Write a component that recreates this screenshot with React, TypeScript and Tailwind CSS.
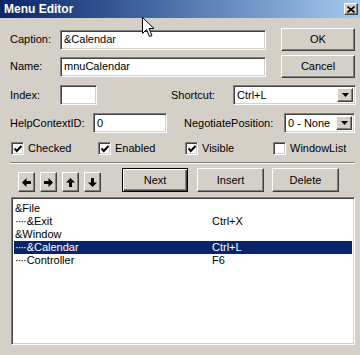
import React from "react";

const raised =
  "bg-[#d4d0c8] border border-t-white border-l-white border-r-[#404040] border-b-[#404040] shadow-[inset_-1px_-1px_0_#808080]";
const sunken =
  "bg-white border border-t-[#808080] border-l-[#808080] border-r-white border-b-white shadow-[inset_1px_1px_0_#404040,inset_-1px_-1px_0_#d4d0c8]";

function TextBox({ w, value }: { w: string; value?: string }) {
  return (
    <div className={`${sunken} ${w} h-[20px] flex items-center pl-[3px] overflow-hidden whitespace-nowrap`}>
      {value}
    </div>
  );
}

function Combo({ w, value }: { w: string; value: string }) {
  return (
    <div className={`${sunken} ${w} h-[20px] flex items-center p-[2px] pl-[3px]`}>
      <div className="flex-1 whitespace-nowrap overflow-hidden">{value}</div>
      <div className={`${raised} w-[16px] h-full flex items-center justify-center`}>
        <svg width="7" height="4" viewBox="0 0 7 4">
          <path d="M0 0H7L3.5 4Z" fill="#000" />
        </svg>
      </div>
    </div>
  );
}

function Button({ w, label, def }: { w: string; label: string; def?: boolean }) {
  const cls = def
    ? "bg-[#d4d0c8] border border-black shadow-[inset_1px_1px_0_#fff,inset_-1px_-1px_0_#404040,inset_-2px_-2px_0_#808080]"
    : raised;
  return <div className={`${cls} ${w} h-[24px] flex items-center justify-center`}>{label}</div>;
}

function Check({ label, checked, w }: { label: string; checked: boolean; w: string }) {
  return (
    <div className={`flex items-center ${w}`}>
      <div className={`${sunken} w-[13px] h-[13px] flex items-center justify-center shrink-0`}>
        {checked && (
          <svg width="8" height="8" viewBox="0 0 8 8">
            <path d="M0.5 3.5L2.8 6L7.5 1" stroke="#000" strokeWidth="2" fill="none" />
          </svg>
        )}
      </div>
      <span className="ml-[4px]">{label}</span>
    </div>
  );
}

function ArrowBtn({ dir }: { dir: "l" | "r" | "u" | "d" }) {
  const rot = { l: 0, r: 180, u: 90, d: 270 }[dir];
  return (
    <div className={`${raised} w-[17px] h-[20px] flex items-center justify-center`}>
      <svg width="9" height="9" viewBox="0 0 9 9" style={{ transform: `rotate(${rot}deg)` }}>
        <path d="M0 4.5L4.5 0V3H9V6H4.5V9Z" fill="#000" />
      </svg>
    </div>
  );
}

const items = [
  { d: false, t: "&File", s: "" },
  { d: true, t: "&Exit", s: "Ctrl+X" },
  { d: false, t: "&Window", s: "" },
  { d: true, t: "&Calendar", s: "Ctrl+L", sel: true },
  { d: true, t: "Controller", s: "F6" },
];

export default function App() {
  return (
    <div
      className="relative w-[360px] h-[355px] bg-[#d4d0c8] overflow-hidden text-[11px] text-black"
      style={{ fontFamily: '"Liberation Sans", Arial, sans-serif' }}
    >
      {/* Title bar */}
      <div className="h-[18px] flex items-center justify-between pl-[4px] pr-[2px] bg-gradient-to-r from-[#0a246a] to-[#a6caf0]">
        <span className="text-white font-bold text-[12px]">Menu Editor</span>
        <div className={`${raised} w-[14px] h-[12px] flex items-center justify-center`}>
          <svg width="8" height="7" viewBox="0 0 8 7">
            <path d="M0.5 0.5L7.5 6.5M7.5 0.5L0.5 6.5" stroke="#000" strokeWidth="1.6" />
          </svg>
        </div>
      </div>

      <div className="pl-[10px] pt-[10px]">
        {/* Caption */}
        <div className="flex items-center h-[23px]">
          <span className="w-[50px]">Caption:</span>
          <TextBox w="w-[206px]" value="&Calendar" />
          <div className="ml-[15px]">
            <div className={`${raised} w-[74px] h-[23px] flex items-center justify-center`}>OK</div>
          </div>
        </div>
        {/* Name */}
        <div className="flex items-center h-[23px] mt-[4px]">
          <span className="w-[50px]">Name:</span>
          <TextBox w="w-[206px]" value="mnuCalendar" />
          <div className="ml-[15px]">
            <div className={`${raised} w-[74px] h-[23px] flex items-center justify-center`}>Cancel</div>
          </div>
        </div>
        {/* Index / Shortcut */}
        <div className="flex items-center h-[20px] mt-[7px]">
          <span className="w-[50px]">Index:</span>
          <TextBox w="w-[37px]" />
          <span className="ml-[74px] w-[62px]">Shortcut:</span>
          <Combo w="w-[123px]" value="Ctrl+L" />
        </div>
        {/* HelpContextID / NegotiatePosition */}
        <div className="flex items-center h-[20px] mt-[8px]">
          <span className="w-[83px]">HelpContextID:</span>
          <TextBox w="w-[74px]" value="0" />
          <span className="ml-[17px] w-[100px]">NegotiatePosition:</span>
          <Combo w="w-[71px]" value="0 - None" />
        </div>
        {/* Checkboxes */}
        <div className="flex items-center h-[13px] mt-[9px] pl-[1px]">
          <Check w="w-[87px]" label="Checked" checked />
          <Check w="w-[87px]" label="Enabled" checked />
          <Check w="w-[88px]" label="Visible" checked />
          <Check w="w-[80px]" label="WindowList" checked={false} />
        </div>
        {/* Separator */}
        <div className="w-[345px] h-[2px] mt-[7px] border-t border-t-[#808080] border-b border-b-white" />
        {/* Buttons row */}
        <div className="flex items-end h-[24px] mt-[4px]">
          <div className="flex gap-[5px] ml-[8px]">
            <ArrowBtn dir="l" />
            <ArrowBtn dir="r" />
            <ArrowBtn dir="u" />
            <ArrowBtn dir="d" />
          </div>
          <div className="ml-[21px]">
            <Button w="w-[66px]" label="Next" def />
          </div>
          <div className="ml-[9px]">
            <Button w="w-[67px]" label="Insert" />
          </div>
          <div className="ml-[8px]">
            <Button w="w-[67px]" label="Delete" />
          </div>
        </div>
        {/* List */}
        <div className={`${sunken} ml-[1px] mt-[5px] w-[344px] h-[148px] p-[2px] pt-[4px]`}>
          {items.map((it, i) => (
            <div
              key={i}
              className={`flex h-[13px] items-center whitespace-nowrap ${
                it.sel ? "bg-[#0a246a] text-white" : ""
              }`}
            >
              <span className="w-[198px] pl-[1px]">
                {it.d && <span className="tracking-[-1px]">····</span>}
                {it.d && <span className="inline-block w-[1px]" />}
                {it.t}
              </span>
              <span>{it.s}</span>
            </div>
          ))}
        </div>
      </div>

      {/* Mouse cursor */}
      <svg
        className="absolute left-[142px] top-[17px]"
        width="13"
        height="21"
        viewBox="0 0 13 21"
      >
        <path
          d="M0.5 0.5V16.5L4.5 12.5L7.5 19.5L10 18.5L7 11.5H12Z"
          fill="#fff"
          stroke="#000"
          strokeWidth="1"
          strokeLinejoin="miter"
        />
      </svg>
    </div>
  );
}
